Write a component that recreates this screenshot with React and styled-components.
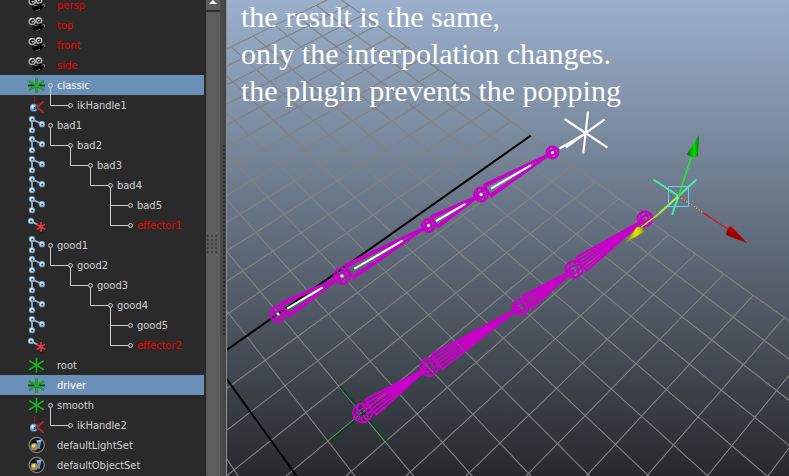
import React from "react";
import styled, { createGlobalStyle } from "styled-components";

const GlobalStyle = createGlobalStyle`
  * { box-sizing: border-box; }
  body { margin: 0; background: #2a2a2a; }
`;

const Workspace = styled.main`
  display: flex;
  height: 100vh;
  overflow: hidden;
  background: #2a2a2a;
`;

const Outliner = styled.aside`
  flex: 0 0 220px;
  display: flex;
  justify-content: space-between;
  overflow: hidden;
`;

const Tree = styled.ul`
  list-style: none;
  flex: 1;
  margin: -5px 2px 0 0;
  padding: 0;
  font: 11px/22px "DejaVu Sans Condensed", "Noto Sans", sans-serif;
`;

const TreeRow = styled.li`
  display: flex;
  height: 20px;
  padding-left: 27px;
  white-space: nowrap;
  color: ${(p) => (p.$selected ? "#ffffff" : p.$system ? "#f00000" : "#d2d2d2")};
  background: ${(p) => (p.$selected ? "#6b90b7" : "transparent")};
`;

const IconBox = styled.svg`
  flex: none;
  width: 20px;
  height: 20px;
`;

const BranchBox = styled.svg`
  flex: none;
  width: ${(p) => p.$depth * 20 + 8}px;
  height: 20px;
  margin-right: 2px;
`;

const ScrollTrack = styled.div`
  flex: 0 0 14px;
  display: flex;
  flex-direction: column;
  gap: 2px;
`;

const ScrollUp = styled.button`
  height: 10px;
  padding: 0;
  border: 0;
  background: #5c5c5c;
  display: flex;
  justify-content: center;
`;

const ScrollThumb = styled.div`
  flex: 1;
  display: flex;
  justify-content: center;
  padding-top: 223px;
  background: linear-gradient(90deg, #565656, #5e5e5e 20%, #5e5e5e);
`;

const Grip = styled.div`
  width: 12px;
  height: 20px;
  background: radial-gradient(circle at 1px 1px, #404040 1px, transparent 1px) 0 0 / 4px 4px;
`;

const Splitter = styled.div`
  flex: 0 0 7px;
  display: flex;
  justify-content: flex-end;
  padding-top: 145px;
  border-right: 1px solid #8b8f94;
  background: linear-gradient(90deg, #4c4c4c, #444444);
`;

const SplitterDots = styled.div`
  width: 3px;
  height: 192px;
  background: radial-gradient(circle at 1px 1px, #2c2c2c 1px, transparent 1px) 0 0 / 3px 4px;
`;

const Viewport = styled.section`
  position: relative;
  flex: 1;
  min-width: 0;
  overflow: hidden;
  background: linear-gradient(#9bb0cc, #27292c);
`;

const Scene = styled.svg`
  position: absolute;
  inset: 0;
  width: 100%;
  height: 100%;
`;

const Annotation = styled.p`
  position: relative;
  margin: -2px 0 0;
  padding-left: 14px;
  color: #ffffff;
  font: 30px/37px "Liberation Serif", serif;
  white-space: nowrap;
`;

const nodes = [
  { name: "persp", icon: "camera", system: true },
  { name: "top", icon: "camera", system: true },
  { name: "front", icon: "camera", system: true },
  { name: "side", icon: "camera", system: true },
  { name: "classic", icon: "locator", parent: true, selected: true },
  { name: "ikHandle1", icon: "handle", depth: 1 },
  { name: "bad1", icon: "joint", parent: true },
  { name: "bad2", icon: "joint", depth: 1, parent: true },
  { name: "bad3", icon: "joint", depth: 2, parent: true },
  { name: "bad4", icon: "joint", depth: 3, parent: true },
  { name: "bad5", icon: "joint", depth: 4, sibling: true },
  { name: "effector1", icon: "effector", depth: 4, system: true },
  { name: "good1", icon: "joint", parent: true },
  { name: "good2", icon: "joint", depth: 1, parent: true },
  { name: "good3", icon: "joint", depth: 2, parent: true },
  { name: "good4", icon: "joint", depth: 3, parent: true },
  { name: "good5", icon: "joint", depth: 4, sibling: true },
  { name: "effector2", icon: "effector", depth: 4, system: true },
  { name: "root", icon: "locator" },
  { name: "driver", icon: "locator", selected: true },
  { name: "smooth", icon: "locator", parent: true },
  { name: "ikHandle2", icon: "handle", depth: 1 },
  { name: "defaultLightSet", icon: "set" },
  { name: "defaultObjectSet", icon: "set" },
];

function Ball({ x, y, r = 3.1 }) {
  return (
    <>
      <circle cx={x} cy={y} r={r} fill="#7aa9d0" />
      <circle cx={x - 0.3} cy={y - 0.3} r={r - 1} fill="#d4ebf9" />
      <circle cx={x + 0.2} cy={y + 0.2} r={r * 0.32} fill="#1d3a55" />
    </>
  );
}

const icons = {
  camera: () => (
    <>
      <circle cx="5.2" cy="6.4" r="3" fill="#222" stroke="#a5a5a5" strokeWidth="1.5" />
      <circle cx="12" cy="5.6" r="2.7" fill="#222" stroke="#b0b0b0" strokeWidth="1.5" />
      <path d="M3 4.5l2-1M10 3.5l2.5-.8M5 7l1.6-.8M11.3 5.8l1.4-.6" stroke="#eee" strokeWidth="1.1" />
      <path d="M5 10.5l9-2.2 1 1.7 3-2 .3 5-3.2-.5-.4 2.5-6 2-3-3z" fill="#050505" />
      <path d="M6.5 11l5-1.2M14.8 10.6l2.7-1.6v3.5M8.5 16l4.8-1.7" stroke="#8a8a8a" strokeWidth=".8" />
    </>
  ),
  locator: ({ selected }) => (
    <>
      {selected && <path d="M1 10.5h17M9.5 3v15M2 6l15 9M17 6L2 15" stroke="#0e4a1c" strokeWidth="2" />}
      {!selected && <path d="M10.5 4v15M3 7l15 9M18 7L3 16" stroke="#0b240b" strokeWidth="1.6" />}
      <path d="M9.5 2.8v15M2.2 5.8l14.6 9M16.8 5.8l-14.6 9" stroke="#22ac2c" strokeWidth="1.8" />
    </>
  ),
  handle: () => (
    <>
      <path d="M7.5 1.5v7" stroke="#c02020" strokeWidth="1.2" strokeDasharray="2 1" />
      <path d="M10.5 11.5l6-4.8M11 12.8l5.7 5" stroke="#c22020" strokeWidth="2" />
      <circle cx="6.8" cy="12.7" r="3.9" fill="#6899c2" />
      <circle cx="6" cy="11.8" r="2" fill="#dceefa" />
      <path d="M7.5 12v3M6.5 13h4M9.5 10.5v4" stroke="#173552" strokeWidth="1" />
    </>
  ),
  joint: () => (
    <>
      <path d="M6 5v11" stroke="#101820" strokeWidth="3" />
      <path d="M5 4.2v11M5 4.2l10 4.8" stroke="#9cb6ca" strokeWidth="1.8" />
      <Ball x={5} y={4.2} />
      <Ball x={15} y={9.2} />
      <Ball x={5} y={15.2} />
    </>
  ),
  effector: () => (
    <>
      <path d="M4 6l7 4" stroke="#9cb6ca" strokeWidth="2" />
      <Ball x={4} y={6} />
      <path d="M14.8 7.5v10M10 9.8l9 5.4M18.6 10l-8.6 5.4" stroke="#3b0808" strokeWidth="2" />
      <path d="M14 7v10M9.4 9.3l9 5.2M18 9.4l-8.6 5.2" stroke="#e33e46" strokeWidth="1.6" />
    </>
  ),
  set: () => (
    <>
      <circle cx="9.7" cy="10" r="7.6" fill="#151515" stroke="#858585" strokeWidth="1.2" />
      <path d="M9.5 5.5l5.2-1-2 9.5-1.3.2z" fill="#5f8fc2" />
      <path d="M9.5 5.5l5.2-1-.5 2.2-4.2.4z" fill="#96bce2" />
      <circle cx="7.3" cy="11.8" r="3.8" fill="#a08c4c" />
      <circle cx="6.6" cy="10.8" r="1.8" fill="#e4d49a" />
    </>
  ),
};

function Branch({ depth, parent, sibling, selected }) {
  const x = 3.5 + depth * 20;
  const px = x - 20;
  return (
    <BranchBox $depth={depth} aria-hidden="true" stroke={selected ? "#c9d3de" : "#cfcfcf"} fill="none">
      {depth > 0 && <path d={`M${px} 0V10.5H${x - 2}`} />}
      {sibling && <path d={`M${px} 10V20`} />}
      {parent && <path d={`M${x} 12.5V20`} />}
      {(parent || depth > 0) && <circle cx={x} cy="10.5" r="2" />}
    </BranchBox>
  );
}

function OutlinerRow({ name, icon, depth = 0, parent, sibling, selected, system }) {
  const Icon = icons[icon];
  return (
    <TreeRow role="treeitem" aria-level={depth + 1} aria-selected={!!selected} $selected={selected} $system={system}>
      <IconBox viewBox="0 0 20 20" fill="none" aria-hidden="true">
        <Icon selected={selected} />
      </IconBox>
      <Branch depth={depth} parent={parent} sibling={sibling} selected={selected} />
      <span>{name}</span>
    </TreeRow>
  );
}

/* Perspective projection of the ground plane: u and v are grid units. */
const GRID = 12;
function project(u, v) {
  const w = 1 + 0.02496 * u - 0.02643 * v;
  return [(212.8 + 39.74 * u + 12.224 * v) / w, (359.8 - 15.3 * u + 15.25 * v) / w];
}
function segment(a, b) {
  return `M${a[0].toFixed(1)} ${a[1].toFixed(1)}L${b[0].toFixed(1)} ${b[1].toFixed(1)}`;
}
const steps = Array.from({ length: GRID * 2 + 1 }, (_, i) => i - GRID).filter((k) => k !== 0);
const gridPath = steps
  .map((k) => segment(project(k, -GRID), project(k, GRID)) + segment(project(-GRID, k), project(GRID, k)))
  .join("");
const axisPath = segment(project(0, -GRID), project(0, GRID)) + segment(project(-GRID, 0), project(GRID, 0));

const classicChain = [[278, 314], [342, 276], [428.5, 225.5], [481, 194.5], [552.5, 152.5]];
const smoothChain = [[362.5, 413], [429, 367], [520.5, 307], [574, 269.5], [645, 219]];
const classicSizes = [8, 8, 6.5, 7, 6];
const smoothSizes = [9.5, 9, 8, 8.5, 7.5];

function Bone({ from, to, size, rays }) {
  const dx = to[0] - from[0];
  const dy = to[1] - from[1];
  const len = Math.hypot(dx, dy);
  const ux = dx / len;
  const uy = dy / len;
  const at = (along, side) => [from[0] + ux * along - uy * side, from[1] + uy * along + ux * side];
  const d = rays.map((r) => segment(at(size + 2 - Math.abs(r) * 2, r * size), to)).join("");
  return <path d={d + segment(at(size, -size), at(size + 1, size))} />;
}

function Joint({ x, y, r }) {
  return (
    <g strokeWidth="1.8">
      <circle cx={x} cy={y} r={r} />
      <ellipse cx={x} cy={y} rx={r} ry={r * 0.4} transform={`rotate(-28 ${x} ${y})`} />
      <ellipse cx={x} cy={y} rx={r * 0.45} ry={r} transform={`rotate(-20 ${x} ${y})`} />
    </g>
  );
}

function Chain({ points, sizes, rays, core }) {
  return (
    <g fill="none" stroke="#c800c8" strokeWidth="2.2">
      {points.slice(1).map((to, i) => (
        <Bone key={i} from={points[i]} to={to} size={sizes[i]} rays={rays} />
      ))}
      {core &&
        points.slice(1).map((to, i) => {
          const p = points[i];
          const mix = (t) => [p[0] + (to[0] - p[0]) * t, p[1] + (to[1] - p[1]) * t];
          return <path key={i} d={segment(mix(0.14), mix(0.7))} stroke="#ffffff" strokeWidth="2" />;
        })}
      {points.map(([x, y], i) => (
        <g key={i}>
          {core && <circle cx={x} cy={y} r="1.6" fill="#ffffff" stroke="none" />}
          <Joint x={x} y={y} r={sizes[i]} />
        </g>
      ))}
    </g>
  );
}

function SceneView() {
  return (
    <Scene viewBox="227 0 562 476" preserveAspectRatio="xMinYMin slice" role="img" aria-label="Perspective view">
      <defs>
        <linearGradient id="coneGreen">
          <stop offset="0" stopColor="#006a00" />
          <stop offset=".6" stopColor="#00d800" />
          <stop offset="1" stopColor="#008000" />
        </linearGradient>
        <linearGradient id="coneRed" x1="0" y1="1" x2="1" y2="0">
          <stop offset="0" stopColor="#600000" />
          <stop offset=".45" stopColor="#a00000" />
          <stop offset="1" stopColor="#f00000" />
        </linearGradient>
        <linearGradient id="coneYellow">
          <stop offset="0" stopColor="#808000" />
          <stop offset=".6" stopColor="#e6e600" />
          <stop offset="1" stopColor="#a0a000" />
        </linearGradient>
      </defs>
      <path d={gridPath} stroke="#828282" strokeWidth="1.1" fill="none" />
      <path d={axisPath} stroke="#000000" strokeWidth="2" fill="none" />
      <path d="M340 386l47 55M330 441l34-28" stroke="#074721" strokeWidth="2" />

      <Chain points={classicChain} sizes={classicSizes} rays={[-1, -0.72, 0.72, 1]} core />
      <Chain points={smoothChain} sizes={smoothSizes} rays={[-1, -0.6, -0.2, 0.2, 0.6, 1]} />

      <path
        d="M588 111.5l-4.7 42M564.5 119l43 28.7M604.7 119.3l-38.7 28M559.5 148.5l26-15"
        stroke="#ffffff"
        strokeWidth="2.2"
      />

      <g fill="none" strokeWidth="2">
        <path d="M653.5 179.5l25 16.5M696.5 179.5l-18 16.5M672 215l6.5-19" stroke="#48f0a0" />
        <path d="M678.5 196l-20 18" stroke="#a8f050" />
        <path d="M678.5 196l14-42" stroke="#20e830" strokeWidth="1.6" />
        <path d="M658.5 214l-17 13" stroke="#e8e800" strokeWidth="1.2" />
        <path d="M678.5 196l25 17" stroke="#3c5a30" strokeWidth="1.4" />
        <path d="M678.5 196l25 17" stroke="#e8a070" strokeWidth="1.2" strokeDasharray="2 1" />
        <path d="M703.5 213l24 16" stroke="#dc1020" strokeWidth="1.3" />
        <path d="M668.5 186.5h20v20h-20z" stroke="#66ccf4" strokeWidth="1" />
      </g>
      <path d="M699 135L687 154q2 3 6 3 4 0 5-1z" fill="url(#coneGreen)" />
      <path d="M747 243L731 226q-4 1-5 9z" fill="url(#coneRed)" />
      <path d="M625 243l12-16q6 0 7 5z" fill="url(#coneYellow)" />
    </Scene>
  );
}

export default function App() {
  return (
    <>
      <GlobalStyle />
      <Workspace>
        <Outliner aria-label="Outliner">
          <Tree role="tree">
            {nodes.map((node) => (
              <OutlinerRow key={node.name} {...node} />
            ))}
          </Tree>
          <ScrollTrack>
            <ScrollUp aria-label="Scroll up">
              <svg width="8" height="5" viewBox="0 0 8 5" aria-hidden="true">
                <path d="M4 0l4 4H0z" fill="#ffffff" />
              </svg>
            </ScrollUp>
            <ScrollThumb>
              <Grip />
            </ScrollThumb>
          </ScrollTrack>
        </Outliner>
        <Splitter role="separator" aria-orientation="vertical">
          <SplitterDots />
        </Splitter>
        <Viewport>
          <SceneView />
          <Annotation>
            the result is the same,
            <br />
            only the interpolation changes.
            <br />
            the plugin prevents the popping
          </Annotation>
        </Viewport>
      </Workspace>
    </>
  );
}
